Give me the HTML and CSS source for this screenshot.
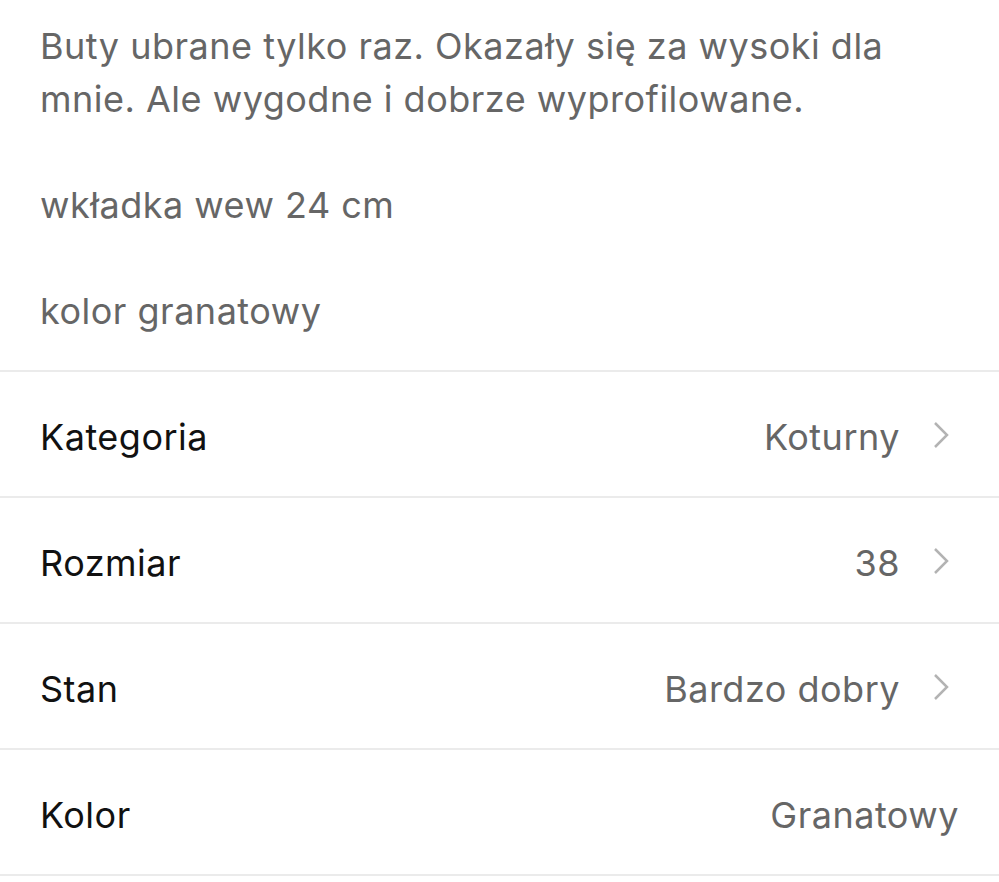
FILE: index.html
```html
<!DOCTYPE html>
<html lang="pl">
<head>
    <meta charset="UTF-8">
    <meta name="viewport" content="width=device-width, initial-scale=1.0">
    <title>Szczegóły</title>
    <link rel="stylesheet" href="styles.css">
</head>
<body>

    <div class="description">
        <p>Buty ubrane tylko raz. Okazały się za wysoki dla mnie. Ale wygodne i dobrze wyprofilowane.</p>
        <p>wkładka wew 24 cm</p>
        <p>kolor granatowy</p>
    </div>

    <div class="details">
        <div class="row">
            <span class="label">Kategoria</span>
            <span class="value">Koturny</span>
            <svg class="chevron" viewBox="0 0 16 28"><path d="M2 2 L14 14 L2 26"/></svg>
        </div>
        <div class="row">
            <span class="label">Rozmiar</span>
            <span class="value">38</span>
            <svg class="chevron" viewBox="0 0 16 28"><path d="M2 2 L14 14 L2 26"/></svg>
        </div>
        <div class="row">
            <span class="label">Stan</span>
            <span class="value">Bardzo dobry</span>
            <svg class="chevron" viewBox="0 0 16 28"><path d="M2 2 L14 14 L2 26"/></svg>
        </div>
        <div class="row">
            <span class="label">Kolor</span>
            <span class="value">Granatowy</span>
        </div>
    </div>

</body>
</html>
```

FILE: styles.css
```css
* {
    margin: 0;
    padding: 0;
    box-sizing: border-box;
}

body {
    font-family: Inter, "Noto Sans", sans-serif;
    background-color: #fff;
    width: 999px;
}

.description {
    padding: 20px 40px 32px;
    color: #666;
    font-size: 36px;
    letter-spacing: 0.5px;
    line-height: 53px;
    border-bottom: 2px solid #ebebeb;
}

.description p + p {
    margin-top: 53px;
}

.row {
    display: flex;
    align-items: center;
    height: 126px;
    padding: 6px 40px 0;
    border-bottom: 2px solid #ebebeb;
    font-size: 36px;
    letter-spacing: 0.5px;
}

.label {
    color: #111;
    flex: 1;
}

.value {
    color: #666;
}

.chevron {
    width: 16px;
    height: 28px;
    margin-left: 33px;
    margin-right: 10px;
    margin-top: -4px;
    fill: none;
    stroke: #b3b3b3;
    stroke-width: 2.5;
}
```
